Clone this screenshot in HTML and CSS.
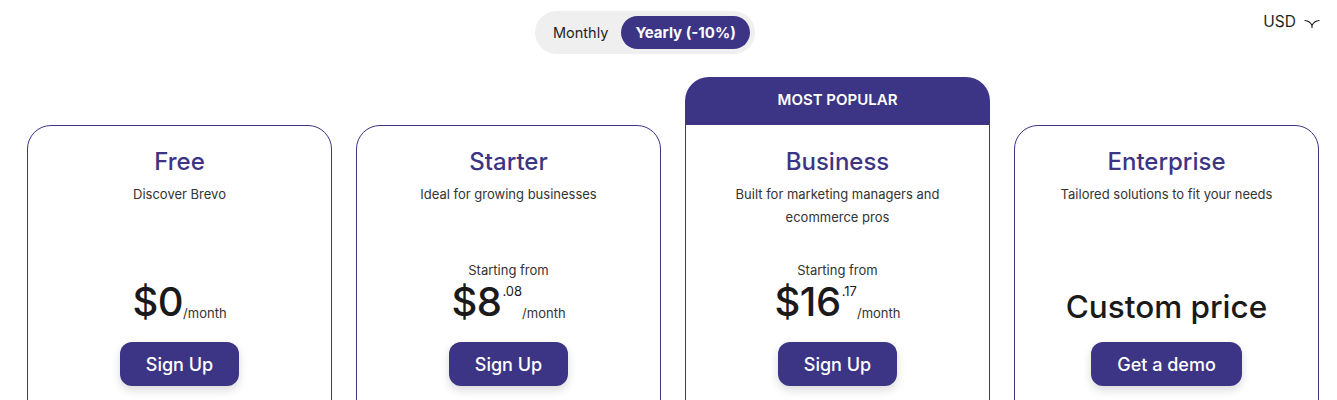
FILE: index.html
```html
<!DOCTYPE html>
<html lang="en">
<head>
    <meta charset="UTF-8">
    <meta name="viewport" content="width=device-width, initial-scale=1.0">
    <title>Pricing</title>
    <link rel="stylesheet" href="styles.css">
</head>
<body>
<div class="top-bar">
    <div class="spacer"></div>
    <div class="billing-toggle">
        <span class="toggle-option">Monthly</span>
        <span class="toggle-option active">Yearly (-10%)</span>
    </div>
    <div class="currency">
        USD
        <svg class="chevron" width="16" height="12" viewBox="0 0 16 12" fill="none">
            <path d="M1 3.5 Q6 4 8 8.5 Q10 4 15 3.5 M8 8.5 L8 10.5" stroke="#1f1f1f" stroke-width="1.2" stroke-linecap="round"/>
        </svg>
    </div>
</div>

<div class="plans">
    <div class="plan">
        <div class="plan-body">
            <h2 class="plan-name">Free</h2>
            <p class="plan-desc">Discover Brevo</p>
            <div class="price-block">
                <div class="price">
                    <span class="amount">$0</span><span class="period">/month</span>
                </div>
            </div>
            <button class="plan-button">Sign Up</button>
        </div>
    </div>

    <div class="plan">
        <div class="plan-body">
            <h2 class="plan-name">Starter</h2>
            <p class="plan-desc">Ideal for growing businesses</p>
            <div class="price-block">
                <div class="starting">Starting from</div>
                <div class="price">
                    <span class="amount">$8</span><sup class="cents">.08</sup><span class="period">/month</span>
                </div>
            </div>
            <button class="plan-button">Sign Up</button>
        </div>
    </div>

    <div class="plan popular">
        <div class="popular-badge">MOST POPULAR</div>
        <div class="plan-body">
            <h2 class="plan-name">Business</h2>
            <p class="plan-desc">Built for marketing managers and ecommerce pros</p>
            <div class="price-block">
                <div class="starting">Starting from</div>
                <div class="price">
                    <span class="amount">$16</span><sup class="cents">.17</sup><span class="period">/month</span>
                </div>
            </div>
            <button class="plan-button">Sign Up</button>
        </div>
    </div>

    <div class="plan">
        <div class="plan-body">
            <h2 class="plan-name">Enterprise</h2>
            <p class="plan-desc">Tailored solutions to fit your needs</p>
            <div class="price-block">
                <div class="custom-price">Custom price</div>
            </div>
            <button class="plan-button">Get a demo</button>
        </div>
    </div>
</div>
</body>
</html>
```

FILE: styles.css
```css
* {
    margin: 0;
    padding: 0;
    box-sizing: border-box;
}

body {
    font-family: Inter, 'Noto Sans', sans-serif;
    background: #ffffff;
    color: #1f1f1f;
    height: 400px;
    overflow: hidden;
}

/* top bar */
.top-bar {
    display: grid;
    grid-template-columns: 535px auto 1fr;
    align-items: start;
    padding-top: 11px;
    padding-right: 17px;
}

.billing-toggle {
    display: flex;
    align-items: center;
    gap: 13px;
    height: 43px;
    padding: 0 5px 0 18px;
    background: #efefef;
    border-radius: 22px;
}

.toggle-option {
    font-size: 14.5px;
    color: #1f1f1f;
}

.toggle-option.active {
    background: #3c3585;
    color: #ffffff;
    font-weight: 700;
    font-size: 15px;
    height: 33px;
    line-height: 33px;
    padding: 0 14px;
    border-radius: 17px;
}

.currency {
    justify-self: end;
    display: flex;
    align-items: center;
    gap: 8px;
    font-size: 15.5px;
    color: #1f1f1f;
    margin-top: 1px;
}

.chevron {
    margin-top: 2px;
}

/* plans */
.plans {
    display: grid;
    grid-template-columns: repeat(4, 305px);
    gap: 24px;
    align-items: end;
    padding: 23px 0 0 27px;
}

.plan-body {
    display: flex;
    flex-direction: column;
    align-items: center;
    height: 321px;
    padding: 21px 20px 0;
    border: 1px solid #3c3585;
    border-radius: 24px;
    text-align: center;
}

.popular .plan-body {
    border-top: none;
    border-radius: 0 0 24px 24px;
    padding-top: 22px;
}

.popular-badge {
    height: 48px;
    line-height: 46px;
    background: #3c3585;
    color: #ffffff;
    font-size: 15px;
    font-weight: 600;
    text-align: center;
    border-radius: 24px 24px 0 0;
}

.plan-name {
    font-size: 24px;
    line-height: 30px;
    font-weight: 500;
    color: #3c3585;
}

.plan-desc {
    margin-top: 6px;
    height: 72px;
    font-size: 13px;
    line-height: 23px;
    color: #333333;
    max-width: 220px;
}

.price-block {
    display: flex;
    flex-direction: column;
    justify-content: flex-end;
    align-items: center;
    height: 69px;
}

.starting {
    font-size: 13px;
    line-height: 20px;
    color: #333333;
}

.price {
    display: flex;
    align-items: flex-end;
    height: 44px;
}

.amount {
    font-size: 40px;
    line-height: 44px;
    font-weight: 500;
    color: #1a1a1a;
    letter-spacing: -0.5px;
}

.cents {
    align-self: flex-start;
    font-size: 13px;
    line-height: 20px;
    margin-top: 1px;
    margin-left: 1px;
    color: #1a1a1a;
}

.period {
    font-size: 13px;
    line-height: 20px;
    margin-bottom: 1px;
    color: #333333;
}

.custom-price {
    font-size: 31.5px;
    line-height: 44px;
    font-weight: 500;
    color: #1a1a1a;
    margin-bottom: -5px;
}

.plan-button {
    margin-top: 18px;
    height: 44px;
    padding: 0 26px;
    border: none;
    border-radius: 12px;
    background: #3c3585;
    color: #ffffff;
    font-family: Inter, 'Noto Sans', sans-serif;
    font-size: 18px;
    font-weight: 500;
    box-shadow: 0 4px 10px rgba(0, 0, 0, 0.15);
    cursor: pointer;
}
```
